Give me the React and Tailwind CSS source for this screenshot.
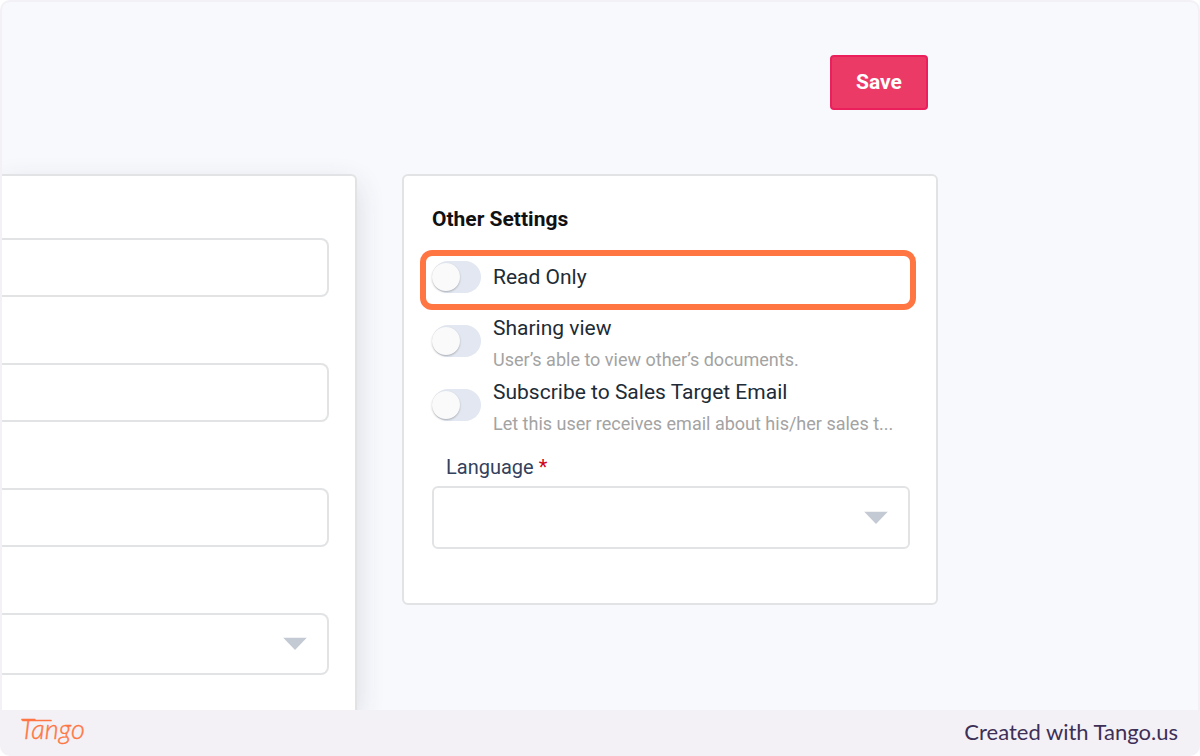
import React, { useId } from "react";

const border = "border-2 border-[#e2e3e4]";

function Caret() {
  return (
    <svg
      className="pointer-events-none absolute right-[22px] top-1/2 -translate-y-1/2"
      width="24"
      height="13"
      viewBox="0 0 24 13"
      aria-hidden="true"
    >
      <path d="M0 0H24L12 12.5Z" fill="#c4cad3" />
    </svg>
  );
}

function Toggle({ title, note, highlighted }) {
  const id = useId();
  return (
    <div className="relative flex h-16 items-center gap-3">
      <input
        id={id}
        type="checkbox"
        role="switch"
        className="h-8 w-[49px] shrink-0 appearance-none rounded-full bg-[#e2e7f1] before:block before:mt-[2px] before:size-7 before:rounded-full before:bg-[#fafafa] before:shadow-[0_1px_2px_rgba(0,0,0,0.25)] before:content-[''] checked:bg-[#ec3a67] checked:before:ml-[21px]"
      />
      <label htmlFor={id} className={note ? "min-w-0 flex-1 pr-2 pt-1.5" : "min-w-0 flex-1"}>
        <span className="block truncate text-[21px] leading-8 text-[#212b36]">{title}</span>
        {note && (
          <span className="block text-[18px] leading-8 text-[#a3a3a3]">{note}</span>
        )}
      </label>
      {highlighted && (
        <div className="pointer-events-none absolute -left-3 -right-1.5 top-[5px] h-[60px] rounded-xl border-6 border-[#ff7643]" />
      )}
    </div>
  );
}

function TangoLogo() {
  return (
    <svg width="72" height="46" viewBox="0 0 72 46" role="img" aria-label="Tango">
      <text
        x="0"
        y="29"
        fill="#ff7643"
        stroke="#ff7643"
        strokeWidth="0.4"
        className="font-['Lato',sans-serif] text-[27px] font-light italic"
      >
        Tango
      </text>
      <path d="M3 10.5H31" fill="none" stroke="#ff7643" strokeWidth="1.7" strokeLinecap="round" />
    </svg>
  );
}

export default function App() {
  return (
    <div className="min-h-screen bg-white font-['Roboto',sans-serif]">
      <div className="flex min-h-screen flex-col overflow-hidden rounded-[10px] bg-[#f3f1f6]">
        <main className="mx-[2px] mt-[2px] flex flex-1 flex-col overflow-hidden rounded-t-lg bg-[#f8f9fd]">
          <div className="flex justify-end pr-[270px] pt-[53px]">
            <button
              type="button"
              className="h-[55px] w-[98px] rounded border-2 border-[#ea1f5c] bg-[#ec3a67] text-[21px] font-bold text-white"
            >
              Save
            </button>
          </div>

          <div className="mt-16 flex flex-1 gap-[45px] pr-[260px]">
            <section className="flex min-w-0 flex-1 flex-col gap-[66px] rounded-tr-md border-r-2 border-t-2 border-[#e2e3e4] bg-white pb-[35px] pr-[26px] pt-[62px] shadow-[0_10px_28px_rgba(50,55,70,0.16)]">
              {["Field 1", "Field 2", "Field 3"].map((name) => (
                <input
                  key={name}
                  type="text"
                  aria-label={name}
                  className="h-[59px] w-full rounded-r-lg border-2 border-l-0 border-[#e2e3e4] bg-white px-4 text-[20px]"
                />
              ))}
              <div className="relative">
                <select
                  aria-label="Field 4"
                  className="block h-[62px] w-full appearance-none rounded-r-lg border-2 border-l-0 border-[#e2e3e4] bg-white px-4 text-[20px]"
                >
                  <option value=""></option>
                </select>
                <Caret />
              </div>
            </section>

            <section
              className={`w-[536px] shrink-0 self-start rounded-md bg-white pb-[54px] pl-7 pr-[26px] pt-7 ${border}`}
            >
              <h2 className="text-[21px] font-bold leading-[30px] text-[#111111]">Other Settings</h2>
              <div className="mt-[11px]">
                <Toggle title="Read Only" highlighted />
                <Toggle title="Sharing view" note="User’s able to view other’s documents." />
                <Toggle
                  title="Subscribe to Sales Target Email"
                  note="Let this user receives email about his/her sales t..."
                />
              </div>
              <label htmlFor="language" className="mt-[15px] block pl-[14px] text-[20px] leading-[30px] text-[#33415c]">
                Language <span className="text-[#d0021b]">*</span>
              </label>
              <div className="relative mt-1">
                <select
                  id="language"
                  className={`block h-[63px] w-full appearance-none rounded-md bg-white px-4 text-[20px] ${border}`}
                >
                  <option value=""></option>
                </select>
                <Caret />
              </div>
            </section>
          </div>
        </main>

        <footer className="flex h-[46px] items-center justify-between pl-5 pr-[22px]">
          <TangoLogo />
          <p className="pb-0.5 font-['Lato',sans-serif] text-[22px] leading-7 text-[#3d2f56]">Created with Tango.us</p>
        </footer>
      </div>
    </div>
  );
}
